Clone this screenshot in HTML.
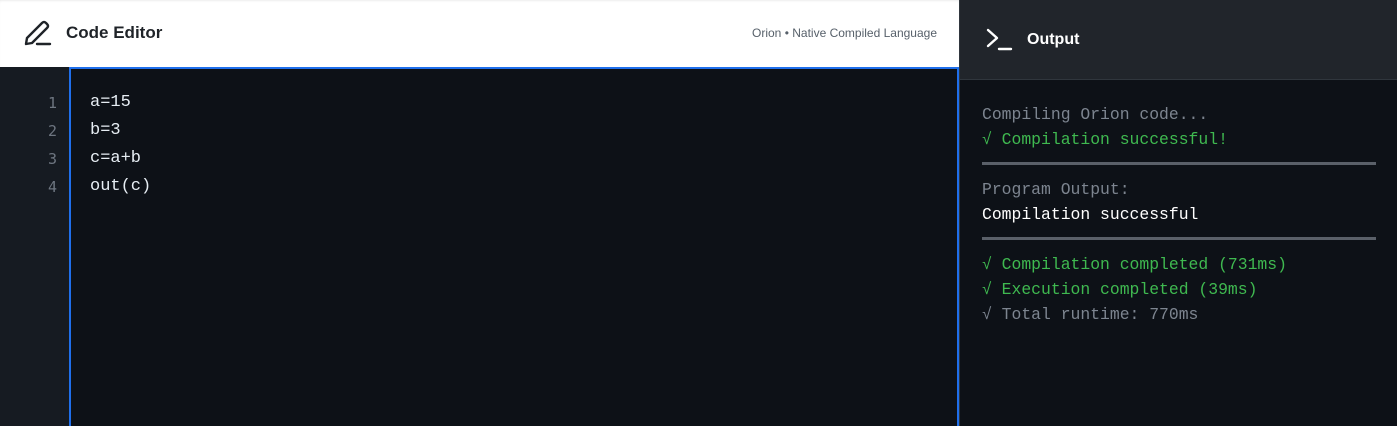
<!DOCTYPE html>
<html><head><style>
*{margin:0;padding:0;box-sizing:border-box}
body{width:1397px;height:426px;overflow:hidden;background:#0d1117;font-family:"Liberation Sans",sans-serif;position:relative}
.hdr{position:absolute;left:0;top:0;width:959px;height:67px;background:#fff;box-shadow:inset 0 2px 3px -2px #ddd}
.hdr .t{position:absolute;left:66px;top:23px;font-size:17px;font-weight:bold;color:#1f2328}
.hdr .s{position:absolute;right:22px;top:26px;font-size:12px;color:#57606a}
.gut{position:absolute;left:0;top:67px;width:69px;height:359px;background:#161b22;color:#6e7681;font-family:"DejaVu Sans Mono",monospace;font-size:15px;text-align:right;padding-right:12px;padding-top:22px;line-height:28px}
.ed{position:absolute;left:69px;top:67px;width:890px;height:359px;background:#0d1117;border:2px solid #1f6feb;border-bottom:none;color:#e6edf3;font-family:"Liberation Mono",monospace;font-size:17px;line-height:28px;padding:20px 0 0 19px}
.op{position:absolute;left:959px;top:0;width:438px;height:426px;background:#0d1117;border-left:1px solid #30363d}
.oh{height:80px;background:#21252b;border-bottom:1px solid #30363d;position:relative}
.oh .t{position:absolute;left:67px;top:31px;color:#fff;font-weight:bold;font-size:16px}
.ob{padding:22px 0 0 22px;font-family:"Liberation Mono",monospace;font-size:16.4px;line-height:25px;color:#7d8590;white-space:pre}
.g{color:#3fb950}.w{color:#fff}
.hr{height:3px;width:394px;background:#5a6069;margin:10px 0 12px}
</style></head><body>
<div class="hdr">
<svg style="position:absolute;left:24px;top:19px" width="30" height="28" viewBox="0 0 30 28" fill="none" stroke="#1f2328" stroke-width="2.4" stroke-linecap="round" stroke-linejoin="round"><path d="M2 25 L3 19 L18 4 Q20 2 22 4 L23 5 Q25 7 23 9 L8 24 Z"/><path d="M13 25 H26"/></svg>
<div class="t">Code Editor</div><div class="s">Orion • Native Compiled Language</div></div>
<div class="gut">1<br>2<br>3<br>4</div>
<div class="ed">a=15<br>b=3<br>c=a+b<br>out(c)</div>
<div class="op"><div class="oh">
<svg style="position:absolute;left:26px;top:28px" width="28" height="24" viewBox="0 0 28 24" fill="none" stroke="#fff" stroke-width="2.4" stroke-linecap="round" stroke-linejoin="round"><path d="M2 2 L11 10 L2 18"/><path d="M13 21 H25"/></svg>
<div class="t">Output</div></div>
<div class="ob">Compiling Orion code...
<span class="g">√ Compilation successful!</span><div class="hr"></div>Program Output:
<span class="w">Compilation successful</span><div class="hr"></div><span class="g">√ Compilation completed (731ms)
√ Execution completed (39ms)</span>
√ Total runtime: 770ms</div></div>
</body></html>
